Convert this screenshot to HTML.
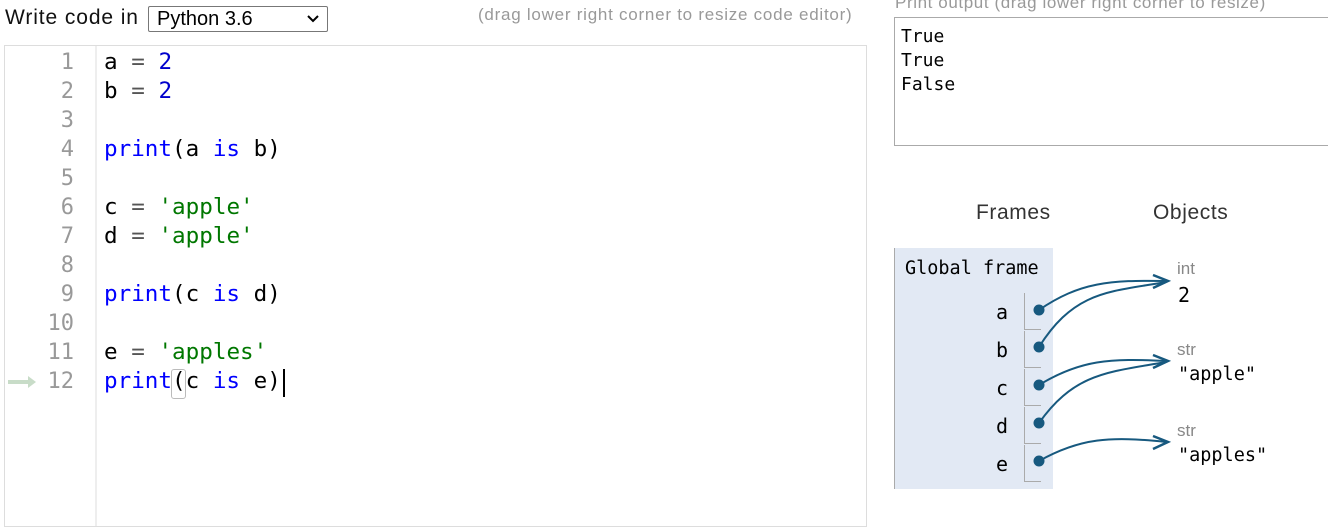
<!DOCTYPE html><html><head><style>
body{margin:0;width:1328px;height:521px;overflow:hidden;background:#fff;font-family:"Liberation Sans",sans-serif;position:relative}
.a{position:absolute;white-space:pre}
.m{font-family:"DejaVu Sans Mono","Liberation Mono",monospace}
.ln{position:absolute;left:20px;width:54px;text-align:right;color:#999;font-family:"DejaVu Sans Mono",monospace;font-size:22px}
.cd{position:absolute;left:104px;font-family:"DejaVu Sans Mono",monospace;font-size:22.6px;color:#000;white-space:pre}
.k{color:#00f}.n{color:#00c}.s{color:#070}.o{color:#555}
.v{position:absolute;left:994px;width:16px;text-align:center;font-family:"DejaVu Sans Mono",monospace;font-size:20px}
.bx{position:absolute;left:1024px;width:16px;height:36px;border-left:1px solid #aaa;border-bottom:1px solid #aaa}
</style></head><body>
<div class="a" style="left:5px;top:6px;font-size:21px;letter-spacing:0.9px;color:#111">Write code in</div>
<div class="a" style="left:148px;top:6px;border:1px solid #777;border-radius:2px;font-size:20px;line-height:24px;padding-left:8px;box-sizing:border-box;width:180px;height:26px">Python 3.6<svg style="position:absolute;right:8px;top:8px" width="12" height="8"><path d="M1 1L6 6L11 1" stroke="#000" stroke-width="2" fill="none"/></svg></div>
<div class="a" style="left:478px;top:5px;font-size:17px;letter-spacing:0.75px;color:#999">(drag lower right corner to resize code editor)</div>
<div class="a" style="left:4px;top:45px;width:861px;height:480px;border:1px solid #ddd"></div>
<div class="a" style="left:95px;top:46px;width:2px;height:480px;background:#eee"></div>
<div class="ln" style="top:50px">1</div><div class="cd" style="top:49px">a <span class="o">=</span> <span class="n">2</span></div>
<div class="ln" style="top:79px">2</div><div class="cd" style="top:78px">b <span class="o">=</span> <span class="n">2</span></div>
<div class="ln" style="top:108px">3</div>
<div class="ln" style="top:137px">4</div><div class="cd" style="top:136px"><span class="k">print</span>(a <span class="k">is</span> b)</div>
<div class="ln" style="top:166px">5</div>
<div class="ln" style="top:195px">6</div><div class="cd" style="top:194px">c <span class="o">=</span> <span class="s">'apple'</span></div>
<div class="ln" style="top:224px">7</div><div class="cd" style="top:223px">d <span class="o">=</span> <span class="s">'apple'</span></div>
<div class="ln" style="top:253px">8</div>
<div class="ln" style="top:282px">9</div><div class="cd" style="top:281px"><span class="k">print</span>(c <span class="k">is</span> d)</div>
<div class="ln" style="top:311px">10</div>
<div class="ln" style="top:340px">11</div><div class="cd" style="top:339px">e <span class="o">=</span> <span class="s">'apples'</span></div>
<div class="ln" style="top:369px">12</div><div class="cd" style="top:368px"><span class="k">print</span>(c <span class="k">is</span> e)</div>
<div class="a" style="left:171px;top:369px;width:13px;height:28px;border:1px solid #bbb;border-radius:3px"></div>
<div class="a" style="left:283px;top:369px;width:2px;height:28px;background:#000"></div>
<svg class="a" style="left:8px;top:374px" width="30" height="16"><path d="M0 8H22" stroke="#c8dcc8" stroke-width="4"/><path d="M20 2L28 8L20 14Z" fill="#c8dcc8"/></svg>
<div class="a" style="left:895px;top:-7px;font-size:17px;letter-spacing:0.6px;color:#999">Print output (drag lower right corner to resize)</div>
<div class="a m" style="left:894px;top:17px;width:440px;height:129px;border:1px solid #aaa;box-sizing:border-box;padding:7px 0 0 6px;font-size:18px;line-height:24px">True
True
False</div>
<div class="a" style="left:976px;top:201px;font-size:21px;letter-spacing:0.6px;color:#333">Frames</div>
<div class="a" style="left:1153px;top:201px;font-size:21px;letter-spacing:0.6px;color:#333">Objects</div>
<div class="a" style="left:894px;top:248px;width:158px;height:241px;background:#e2e9f4;border-left:1px solid #aaa"></div>
<div class="a m" style="left:905px;top:258px;font-size:18.5px">Global frame</div>
<div class="v" style="top:300px">a</div><div class="bx" style="top:293px"></div>
<div class="v" style="top:338px">b</div><div class="bx" style="top:331px"></div>
<div class="v" style="top:376px">c</div><div class="bx" style="top:369px"></div>
<div class="v" style="top:414px">d</div><div class="bx" style="top:407px"></div>
<div class="v" style="top:452px">e</div><div class="bx" style="top:445px"></div>
<div class="a" style="left:1177px;top:259px;font-size:17px;color:#888">int</div>
<div class="a m" style="left:1178px;top:283px;font-size:20px">2</div>
<div class="a" style="left:1177px;top:340px;font-size:17px;color:#888">str</div>
<div class="a m" style="left:1178px;top:364px;font-size:18.5px">"apple"</div>
<div class="a" style="left:1177px;top:421px;font-size:17px;color:#888">str</div>
<div class="a m" style="left:1178px;top:445px;font-size:18.5px">"apples"</div>
<svg class="a" style="left:0;top:0" width="1328" height="521" fill="none" stroke="#17597f" stroke-width="2">
<g fill="#17597f"><circle cx="1039" cy="310" r="4.5"/><circle cx="1039" cy="347" r="4.5"/><circle cx="1039" cy="385" r="4.5"/><circle cx="1039" cy="423" r="4.5"/><circle cx="1039" cy="461" r="4.5"/></g>
<path d="M1039 310C1080 282 1110 280 1166 281"/>
<path d="M1039 347C1075 290 1110 292 1166 282"/>
<path d="M1039 385C1080 360 1110 358 1166 361"/>
<path d="M1039 423C1075 372 1110 372 1166 362"/>
<path d="M1039 461C1080 438 1110 436 1166 442"/>
<path d="M1153 275L1168 281L1153 288M1153 355L1168 361L1153 368M1153 436L1168 442L1153 449" stroke-width="2.5"/>
</svg>
</body></html>
